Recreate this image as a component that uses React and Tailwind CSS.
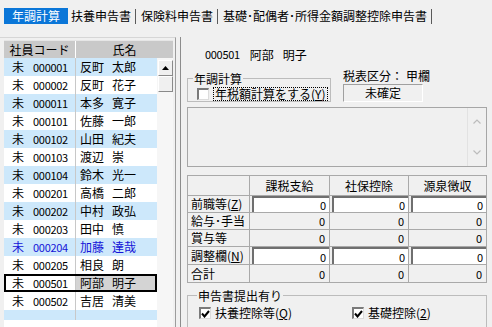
const employees = [
  { code: '000001', sei: '反町', mei: '太郎' },
  { code: '000002', sei: '反町', mei: '花子' },
  { code: '000011', sei: '本多', mei: '寛子' },
  { code: '000101', sei: '佐藤', mei: '一郎' },
  { code: '000102', sei: '山田', mei: '紀夫' },
  { code: '000103', sei: '渡辺', mei: '崇' },
  { code: '000104', sei: '鈴木', mei: '光一' },
  { code: '000201', sei: '高橋', mei: '二郎' },
  { code: '000202', sei: '中村', mei: '政弘' },
  { code: '000203', sei: '田中', mei: '慎' },
  { code: '000204', sei: '加藤', mei: '達哉', blue: true },
  { code: '000205', sei: '相良', mei: '朗' },
  { code: '000501', sei: '阿部', mei: '明子', selected: true },
  { code: '000502', sei: '吉居', mei: '清美' },
];

function Check({ checked }) {
  return (
    <span className="w-[12px] h-[12px] shrink-0 bg-white border-t-2 border-l-2 border-t-[#7a7a7a] border-l-[#7a7a7a] border-r border-b border-r-[#dcdcdc] border-b-[#dcdcdc] flex items-center justify-center">
      {checked && (
        <svg width="9" height="8" viewBox="0 0 9 8">
          <path d="M1 3.5 L3.5 6.5 L8 1" fill="none" stroke="#000" strokeWidth="2" />
        </svg>
      )}
    </span>
  );
}

function EmployeeRow({ emp, index }) {
  const rowBg = index % 2 === 0 ? 'bg-[#cde8fb]' : 'bg-white';
  const color = emp.blue ? 'text-[#1414d8]' : 'text-black';
  if (emp.selected) {
    return (
      <div className={`flex h-[18px] border-2 border-black ${color}`}>
        <div className="w-[70px] flex items-center bg-white border-r border-[#c8c8c8] pl-[6px]">
          <span>未</span>
          <span className="ml-[9px] text-[11px] tracking-[-0.3px]">{emp.code}</span>
        </div>
        <div className="flex-1 flex items-center bg-[#d4d4d4] pl-[4px]">
          <span>{emp.sei}</span>
          <span className="ml-[8px]">{emp.mei}</span>
        </div>
      </div>
    );
  }
  return (
    <div className={`flex h-[18px] ${rowBg} ${color}`}>
      <div className="w-[72px] flex items-center border-r border-[#c8c8c8] pl-[8px]">
        <span>未</span>
        <span className="ml-[9px] text-[11px] tracking-[-0.3px]">{emp.code}</span>
      </div>
      <div className="flex-1 flex items-center pl-[4px]">
        <span>{emp.sei}</span>
        <span className="ml-[8px]">{emp.mei}</span>
      </div>
    </div>
  );
}

const tableRows = [
  { label: <>前職等(<u>Z</u>)</>, input: true, h: 'h-[17px]' },
  { label: <>給与･手当</>, input: false, h: 'h-[17px]' },
  { label: <>賞与等</>, input: false, h: 'h-[17px]' },
  { label: <>調整欄(<u>N</u>)</>, input: true, h: 'h-[18px]' },
  { label: <>合計</>, input: false, h: 'h-[18px]' },
];

function ValueCell({ input }) {
  return (
    <div className="flex items-stretch border-r border-b border-[#a9a9a9]">
      {input ? (
        <div className="flex-1 ml-[2px] bg-white border-l-2 border-t-2 border-[#6f6f6f] flex items-center justify-end pr-[3px] text-[11px]">0</div>
      ) : (
        <div className="flex-1 flex items-center justify-end pr-[4px] text-[11px]">0</div>
      )}
    </div>
  );
}

export default function App() {
  return (
    <div className="w-[492px] h-[327px] overflow-hidden bg-[#f0f0f0] text-black text-[12px] leading-[14px] font-['Noto_Sans_CJK_JP',sans-serif]">
      {/* tabs */}
      <div className="h-[37px] flex items-start pt-[8px] pl-[4px]">
        <div className="w-[64px] h-[16px] bg-[#0a76d8] text-white flex items-center justify-center">年調計算</div>
        <div className="ml-[3px] h-[16px] flex items-center">扶養申告書</div>
        <div className="ml-[4px] mt-[1px] w-[1px] h-[15px] bg-[#5a5a5a]" />
        <div className="ml-[5px] h-[16px] flex items-center">保険料申告書</div>
        <div className="ml-[4px] mt-[1px] w-[1px] h-[15px] bg-[#5a5a5a]" />
        <div className="ml-[5px] h-[16px] flex items-center">基礎･配偶者･所得金額調整控除申告書</div>
        <div className="ml-[4px] mt-[1px] w-[1px] h-[15px] bg-[#5a5a5a]" />
      </div>

      <div className="flex h-[290px]">
        {/* left list */}
        <div className="w-[176px] border-r border-[#9c9c9c] border-t border-t-[#d6d6d6] pl-[4px] pt-[2px] flex flex-col">
          <div className="w-[169px] h-[18px] flex bg-[#c9c9c9] border-t border-[#e6e6e6]">
            <div className="w-[72px] flex items-center justify-center border-r border-white">社員コード</div>
            <div className="flex-1 flex items-center justify-center">氏名</div>
          </div>
          <div className="flex flex-1">
            <div className="w-[153px] bg-white flex flex-col">
              {employees.map((emp, i) => (
                <EmployeeRow key={emp.code} emp={emp} index={i} />
              ))}
              <div className="h-[10px] flex bg-[#cde8fb]">
                <div className="w-[72px] border-r border-[#c8c8c8]" />
              </div>
            </div>
            <div className="w-[16px] bg-[#f6f6f6] flex flex-col pt-[2px] pl-[1px]">
              <div className="h-[16px] bg-[#f0f0f0] border-t border-l border-white border-r border-b border-r-[#8a8a8a] border-b-[#8a8a8a] flex items-center justify-center">
                <svg width="7" height="4" viewBox="0 0 7 4">
                  <path d="M0 4 L3.5 0 L7 4 Z" fill="#000" />
                </svg>
              </div>
              <div className="h-[16px] bg-[#f0f0f0] border-t border-l border-white border-r border-b border-r-[#8a8a8a] border-b-[#8a8a8a]" />
            </div>
          </div>
        </div>

        <div className="w-[4px]" />

        {/* right panel */}
        <div className="flex-1 border-l border-[#8c8c8c] flex flex-col">
          <div className="h-[2px] bg-[#8c8c8c]" />
          <div className="h-[1px] bg-[#d4d4d4]" />
          <div className="pl-[6px] pr-[5px] flex flex-col">
            <div className="mt-[11px] h-[13px] leading-[13px] pl-[18px] flex items-center">
              <span className="text-[11px] tracking-[-0.3px]">000501</span>
              <span className="ml-[10px]">阿部</span>
              <span className="ml-[9px]">明子</span>
            </div>

            <div className="mt-[8px] flex items-start">
              <div className="relative mt-[9px] w-[144px] h-[24px] border border-[#bcbcbc]">
                <span className="absolute -top-[7px] left-[5px] px-[1px] bg-[#f0f0f0] leading-[13px]">年調計算</span>
                <div className="flex items-center pl-[9px] pt-[8px]">
                  <Check />
                  <span className="ml-[4px] px-[1px] leading-[12px] border border-dotted border-black">
                    年税額計算をする(<u>Y</u>)
                  </span>
                </div>
              </div>
              <div className="ml-[12px] flex flex-col">
                <div className="h-[13px] leading-[13px] flex">
                  <span>税表区分：</span>
                  <span className="ml-[3px]">甲欄</span>
                </div>
                <div className="mt-[2px] w-[80px] h-[18px] border-t border-l border-[#a0a0a0] border-r border-b border-r-white border-b-white flex items-center justify-center">
                  未確定
                </div>
              </div>
            </div>

            <div className="mt-[5px] h-[60px] border border-[#a6a6a6] flex justify-end">
              <div className="w-[19px] border-l border-[#e2e2e2] flex flex-col items-center justify-between py-[11px]">
                <svg width="8" height="5" viewBox="0 0 8 5">
                  <path d="M0.5 4.5 L4 1 L7.5 4.5" fill="none" stroke="#bcbcbc" strokeWidth="1.2" />
                </svg>
                <svg width="8" height="5" viewBox="0 0 8 5">
                  <path d="M0.5 0.5 L4 4 L7.5 0.5" fill="none" stroke="#bcbcbc" strokeWidth="1.2" />
                </svg>
              </div>
            </div>

            <div className="mt-[8px] w-[300px] grid grid-cols-[62px_80px_79px_78px] border-l border-t border-[#a9a9a9]">
              <div className="h-[20px] border-r border-b border-[#a9a9a9]" />
              <div className="h-[20px] border-r border-b border-[#a9a9a9] flex items-center justify-center">課税支給</div>
              <div className="h-[20px] border-r border-b border-[#a9a9a9] flex items-center justify-center">社保控除</div>
              <div className="h-[20px] border-r border-b border-[#a9a9a9] flex items-center justify-center">源泉徴収</div>
              {tableRows.map((r, i) => (
                <div key={i} className="contents">
                  <div className={`${r.h} border-r border-b border-[#a9a9a9] flex items-center pl-[3px]`}>{r.label}</div>
                  <ValueCell input={r.input} />
                  <ValueCell input={r.input} />
                  <ValueCell input={r.input} />
                </div>
              ))}
            </div>

            <div className="relative mt-[12px] w-[300px] h-[40px] border border-[#bcbcbc]">
              <span className="absolute -top-[7px] left-[9px] px-[1px] bg-[#f0f0f0] leading-[13px]">申告書提出有り</span>
              <div className="flex items-center pl-[11px] pt-[11px]">
                <div className="w-[153px] flex items-center">
                  <Check checked />
                  <span className="ml-[4px] leading-[12px]">扶養控除等(<u>Q</u>)</span>
                </div>
                <div className="flex items-center">
                  <Check checked />
                  <span className="ml-[4px] leading-[12px]">基礎控除(<u>2</u>)</span>
                </div>
              </div>
            </div>
          </div>
        </div>
      </div>
    </div>
  );
}
